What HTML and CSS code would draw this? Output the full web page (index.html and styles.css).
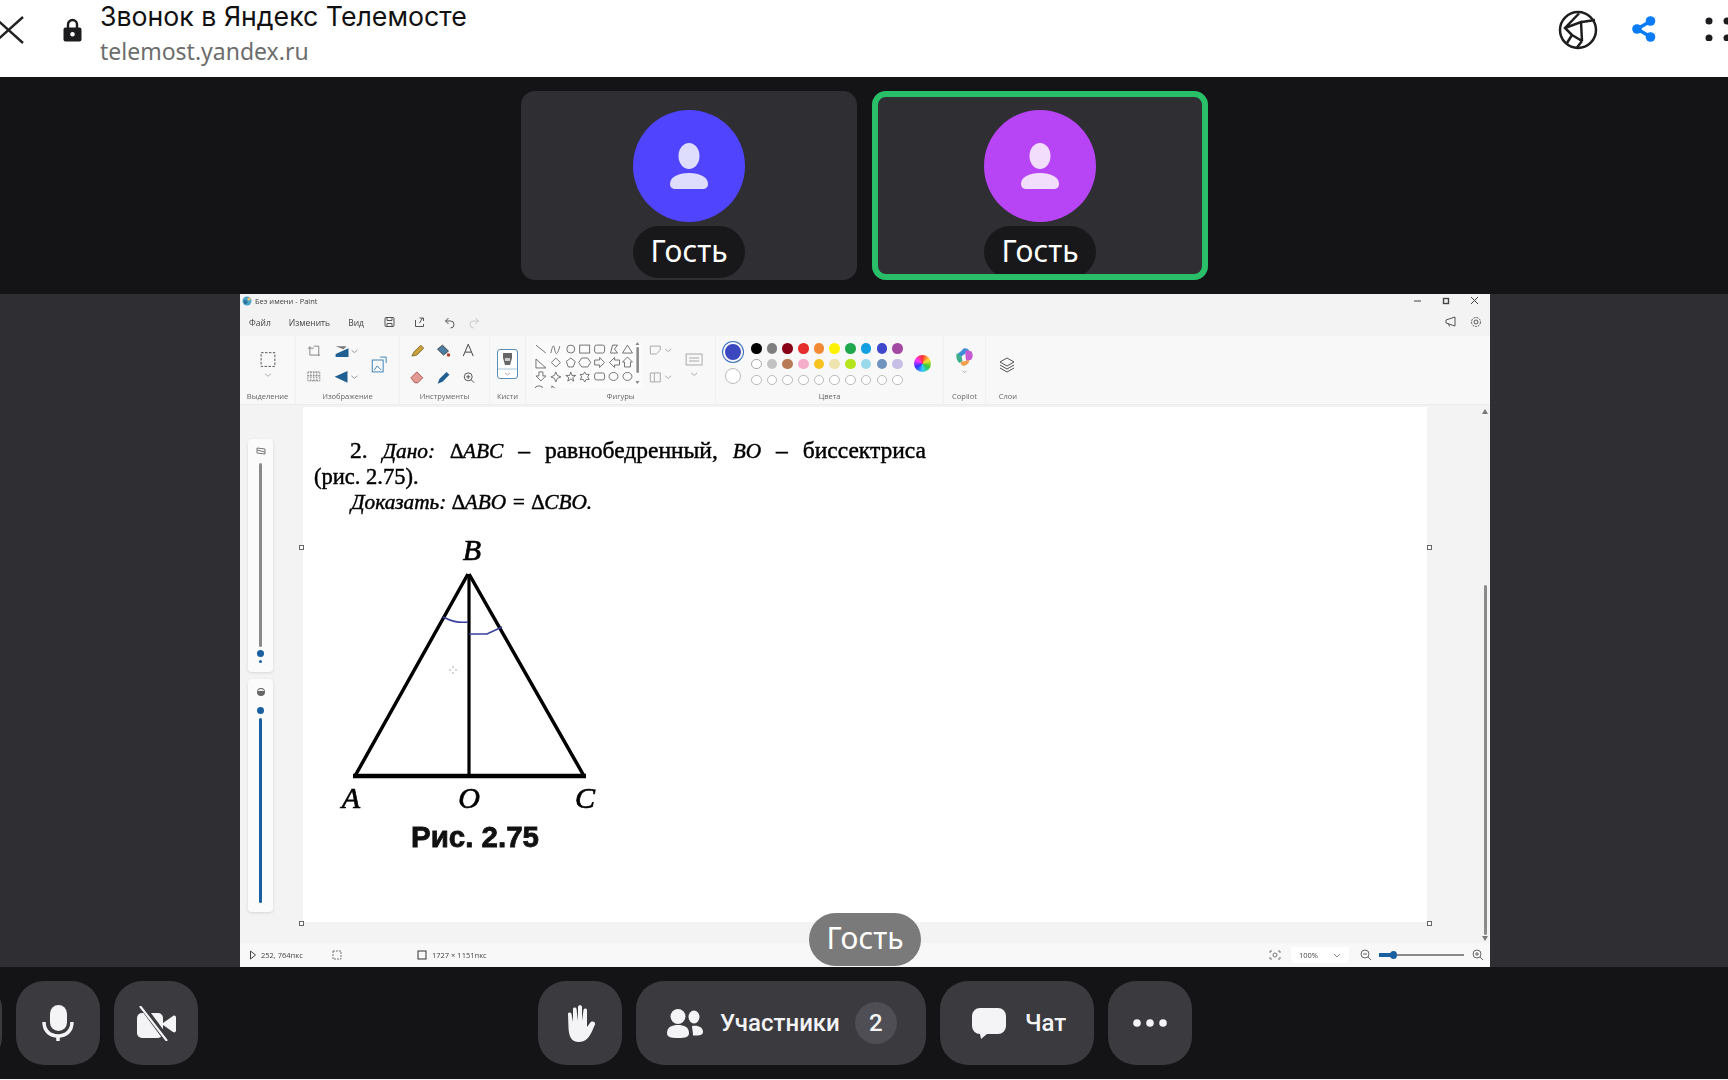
FILE: index.html
```html
<!DOCTYPE html>
<html lang="ru">
<head>
<meta charset="utf-8">
<title>Звонок в Яндекс Телемосте</title>
<link rel="stylesheet" href="styles.css">
</head>
<body>
<header class="topbar">
  <svg class="ic-close" viewBox="-10 0 32 28"><path d="M-8 1L21 27M21 1L-8 27" fill="none" stroke="#222" stroke-width="2.4"/></svg>
  <svg class="ic-lock" viewBox="0 0 19 24"><path d="M5 10V6.500a4.500 4.500 0 0 1 9 0V10" fill="none" stroke="#1c1c1e" stroke-width="2.4"/><path fill-rule="evenodd" d="M2.500 9.500h14a2 2 0 0 1 2 2V21.500a2 2 0 0 1-2 2h-14a2 2 0 0 1-2-2V11.500a2 2 0 0 1 2-2zM9.500 14a2.300 2.300 0 1 0 0 4.600 2.300 2.300 0 0 0 0-4.600z" fill="#1c1c1e"/></svg>
  <div class="titles">
    <div class="page-title">Звонок в Яндекс Телемосте</div>
    <div class="page-url">telemost.yandex.ru</div>
  </div>
  <svg class="ic-globe" viewBox="0 0 40 40"><g fill="none" stroke="#1e1e1e" stroke-width="2.500"><circle cx="20" cy="20" r="18"/><path d="M21 3.500L7 18l7 7M7 18l16-6 1 19M24 12L37 10M24 31l-10-6M24 31l-5 6.500M14 25l-5 8"/></g></svg>
  <svg class="ic-share" viewBox="0 0 24 26"><path d="M19 5L5 13l14 8" fill="none" stroke="#0a7cf5" stroke-width="3.500"/><circle cx="18.500" cy="5" r="4.800" fill="#0a7cf5"/><circle cx="5" cy="13" r="4.800" fill="#0a7cf5"/><circle cx="18.500" cy="21" r="4.800" fill="#0a7cf5"/></svg>
  <svg class="ic-dots" viewBox="0 0 23 24"><g fill="#1c1c1e"><circle cx="4" cy="4" r="3.500"/><circle cx="22" cy="4" r="3.500"/><circle cx="4" cy="21" r="3.500"/><circle cx="22" cy="21" r="3.500"/></g></svg>
</header>

<section class="tiles">
  <article class="tile">
    <div class="avatar avatar-blue"><svg viewBox="0 0 38 46"><ellipse cx="19" cy="13" rx="10.500" ry="13"/><path d="M0 41c0-7 8-11 19-11s19 4 19 11c0 3-2 5-6 5H6c-4 0-6-2-6-5z"/></svg></div>
    <div class="tile-name">Гость</div>
  </article>
  <article class="tile tile-active">
    <div class="avatar avatar-purple"><svg viewBox="0 0 38 46"><ellipse cx="19" cy="13" rx="10.500" ry="13"/><path d="M0 41c0-7 8-11 19-11s19 4 19 11c0 3-2 5-6 5H6c-4 0-6-2-6-5z"/></svg></div>
    <div class="tile-name">Гость</div>
  </article>
</section>

<main class="stage">
  <div class="paint">
    <div class="p-title">
      <svg class="p-logo" viewBox="0 0 10 10"><circle cx="5" cy="5" r="4.500" fill="#4aa3c8"/><circle cx="3.500" cy="6" r="2" fill="#2f6f99"/><circle cx="7" cy="3" r="1.600" fill="#e9c46a"/></svg>
      <span>Без имени - Paint</span>
      <svg class="p-winctl" viewBox="0 0 76 10"><g fill="none" stroke="#444" stroke-width="1"><path d="M0 5h7"/><rect x="29.500" y="2.500" width="5" height="5" stroke-width="1.400"/><path d="M57 1l7 7M64 1l-7 7"/></g></svg>
    </div>
    <div class="p-menu">
      <span class="m-file">Файл</span><span class="m-edit">Изменить</span><span class="m-view">Вид</span>
      <svg class="m-icons" viewBox="0 0 110 14"><g fill="none" stroke="#555" stroke-width="1"><g transform="translate(-4 0)"><rect x="15" y="2.500" width="9" height="9" rx="1"/><path d="M17 2.500v3h5v-3M17 11.500v-3h5v3"/></g><g transform="translate(-4.500 0)"><path d="M46 5v6.500h8V9M50 8l3-5M50 3h4v3"/></g><g transform="translate(-7.500 0)"><path d="M79 6l3-3M79 6l3 3M79 6h5a3 3 0 0 1 0 7"/></g></g><g transform="translate(-3.500 0)"><path d="M108 6l-3-3M108 6l-3 3M108 6h-5a3 3 0 0 0 0 7" fill="none" stroke="#c8c8c8"/></g></svg>
      <span class="m-spacer"></span>
      <svg class="m-right" viewBox="0 0 38 14"><g fill="none" stroke="#555" stroke-width="1"><path d="M1 5l9-3v9L1 8zM3.500 8.500l1 3"/><circle cx="31" cy="7" r="2"/><circle cx="31" cy="7" r="4.500" stroke-dasharray="2 1"/></g></svg>
    </div>
    <div class="ribbon">
      <section class="rg rg-select">
        <svg viewBox="240 336 56 52"><rect x="261.500" y="352.500" width="14" height="14" fill="none" stroke="#555" stroke-dasharray="2.500 1.500"/><path d="M265.500 374l3 2.500 3-2.500" fill="none" stroke="#aaa"/></svg>
        <span>Выделение</span>
      </section>
      <section class="rg rg-image">
        <svg viewBox="297 336 104 52"><g fill="none" stroke="#888"><path d="M311 346v9h10M315 346h5v10M309 348h6"/><path d="M353 350l3 2.500 3-2.500M353 376l3 2.500 3-2.500" stroke="#999"/><path d="M309 372h12v9h-12zM312 372v9M315 372v9M318 372v9M309 376h12" stroke="#777" stroke-dasharray="1.500 1"/><rect x="374" y="360" width="11" height="12" stroke="#3d85b8"/><path d="M376 370l3-4 4 4M388 357h-6M388 357v6" stroke="#3d85b8"/></g><path d="M337 354l13-6v9h-13z" fill="#1f5f92"/><path d="M337 346h11l-3 3z" fill="#777"/><path d="M349 371v12l-13-6z" fill="#1f5f92"/></svg>
        <span>Изображение</span>
      </section>
      <section class="rg rg-tools">
        <svg viewBox="401 336 90 52"><path d="M413 356l2-4 7-7 3 3-7 7z" fill="#c9a23f" stroke="#8a7030"/><path d="M439 349l5-4 6 6-5 4z" fill="#4a7ea6" stroke="#444"/><circle cx="450" cy="355" r="1.800" fill="#b04030"/><path d="M465 356l5-12 5 12M467 352h6" fill="none" stroke="#444"/><path d="M412 378l6-6 6 6-5 5h-3z" fill="#e29a94" stroke="#b05a55"/><path d="M439 384l2-5 7-7 3 3-7 7z" fill="#1f5f92"/><circle cx="470" cy="377" r="4" fill="none" stroke="#555"/><path d="M473 380l3 3M468 377h4M470 375v4" stroke="#555"/></svg>
        <span>Инструменты</span>
      </section>
      <section class="rg rg-brush">
        <div class="brush-box">
          <svg viewBox="0 0 19 28"><path d="M5 3h9v5l-2 7H7L5 8z" fill="#666"/><path d="M7 8h5v3H7z" fill="#ccc"/><path d="M0 19h19" stroke="#a8c4d8"/><path d="M7 23l2.500 2 2.500-2" fill="none" stroke="#aaa"/></svg>
        </div>
        <span>Кисти</span>
      </section>
      <section class="rg rg-shapes">
        <svg viewBox="526 336 190 52"><rect x="533" y="342" width="110" height="46" rx="3" fill="#fbfbfb"/><g fill="none" stroke="#666" stroke-width=".9"><path d="M536 345l10 8M551 353c2-9 3-9 4-3s3 4 5-4"/><circle cx="571" cy="349" r="4"/><rect x="580" y="345" width="10" height="8"/><rect x="595" y="345" width="10" height="8" rx="2"/><path d="M611 353l2-8h5l-3 4 3 4z"/><path d="M623 353l5-8 5 8z"/><path d="M536 368v-9l10 9z"/><path d="M556 358l4.500 4.500-4.500 4.500-4.500-4.500z"/><path d="M571 358l4.500 3.500-2 5.500h-5l-2-5.500z"/><path d="M582 358h6l3 4.500-3 4.500h-6l-3-4.500z"/><path d="M595 360h5v-2.500l5 5-5 5v-2.500h-5z"/><path d="M620 360h-5v-2.500l-5 5 5 5v-2.500h5z"/><path d="M625 362h-2l5-5 5 5h-2v5h-6z"/><path d="M539 372h4v4h3l-5 5-5-5h3z"/><path d="M556 372l1.500 3.500 3.500 1.500-3.500 1.500-1.500 3.500-1.500-3.500-3.500-1.500 3.500-1.500z"/><path d="M571 372l1.200 3.500h3.800l-3 2.200 1 3.500-3-2-3 2 1-3.500-3-2.200h3.800z"/><path d="M585 372l1.500 2.500h3l-1.500 2.500 1.500 2.500h-3l-1.500 2.500-1.500-2.500h-3l1.500-2.500-1.500-2.500h3z"/><rect x="595" y="373" width="10" height="7" rx="2"/><ellipse cx="614" cy="376.500" rx="4.500" ry="4"/><ellipse cx="628" cy="376.500" rx="4.500" ry="4"/><path d="M535 389a4 3 0 0 1 8 0M552 389v-3l4 3"/></g><rect x="637" y="347" width="2.500" height="26" rx="1.200" fill="#888"/><path d="M636 345l2-3 2 3zM636 381l2 3 2-3z" fill="#888"/><g fill="none" stroke="#aaa"><path d="M651 346h10v4l-4 4h-6z"/><path d="M666 349l3 2.500 3-2.500M666 376l3 2.500 3-2.500"/><path d="M651 373h10v9h-10zM655 373v9"/><rect x="687" y="354" width="16" height="11"/><path d="M690 358h10M690 361h10M692 373l3 2.500 3-2.500"/></g></svg>
        <span>Фигуры</span>
      </section>
      <section class="rg rg-colors">
        <div class="colors">
          <div class="cur"><i class="cur-main"></i><i class="cur-alt"></i></div>
          <div class="swatches">
            <i class="c1"></i><i class="c2"></i><i class="c3"></i><i class="c4"></i><i class="c5"></i><i class="c6"></i><i class="c7"></i><i class="c8"></i><i class="c9"></i><i class="c10"></i>
            <i class="c11"></i><i class="c12"></i><i class="c13"></i><i class="c14"></i><i class="c15"></i><i class="c16"></i><i class="c17"></i><i class="c18"></i><i class="c19"></i><i class="c20"></i>
            <i class="e"></i><i class="e"></i><i class="e"></i><i class="e"></i><i class="e"></i><i class="e"></i><i class="e"></i><i class="e"></i><i class="e"></i><i class="e"></i>
          </div>
          <i class="wheel"></i>
        </div>
        <span>Цвета</span>
      </section>
      <section class="rg rg-copilot">
        <svg viewBox="944 336 42 52"><path d="M958 355c0-3 4-3 5-6 2-2 6-1 7 2l-5 3-4 3z" fill="#3f8fd8"/><path d="M966 350l6 1c2 3 2 7-1 9l-4 1-1-4z" fill="#c65ad0"/><path d="M957 353l5 3 1 5-3 2c-3-2-4-6-3-10z" fill="#3fb08c"/><path d="M961 362l9-2c0 3-3 6-6 6-2 0-3-2-3-4z" fill="#f0a050"/><path d="M963 371l2 2 2-2" fill="none" stroke="#aaa"/></svg>
        <span>Copilot</span>
      </section>
      <section class="rg rg-layers">
        <svg viewBox="986 336 44 52"><g fill="none" stroke="#555"><path d="M1007 358l7 4-7 4-7-4z"/><path d="M1000 365l7 4 7-4M1000 368l7 4 7-4"/></g></svg>
        <span>Слои</span>
      </section>
    </div>
    <div class="workspace">
      <aside class="sliders">
        <div class="s-panel">
          <svg class="s-icon" viewBox="0 0 10 8"><path d="M1 1l8 1v5L1 6z" fill="none" stroke="#777"/><path d="M1 3l8 2" stroke="#777"/></svg>
          <div class="s-track s-gray"></div>
          <i class="s-knob"></i>
          <i class="s-dot"></i>
        </div>
        <div class="s-panel">
          <svg class="s-icon s-drop" viewBox="0 0 10 10"><circle cx="5" cy="5" r="4" fill="#666"/><path d="M1.500 4a4 4 0 0 1 7 0z" fill="#eee"/></svg>
          <i class="s-knob s-knob-2"></i>
          <div class="s-track s-blue"></div>
        </div>
      </aside>
      <div class="canvas">
        <div class="doc">
          <p class="l1">2. <em>Дано:</em> <em>∆ABC</em> – равнобедренный, <em>BO</em> – биссектриса</p>
          <p class="l2">(рис. 2.75).</p>
          <p class="l3"><em>Доказать: ∆ABO = ∆CBO.</em></p>
        </div>
        <svg class="figure" viewBox="320 530 300 340">
          <g fill="none" stroke="#000">
            <path d="M468 574L355 776M469 574L584 776" stroke-width="3.500"/>
            <path d="M469 574V776" stroke-width="3.200"/>
            <path d="M353 776H586" stroke-width="4.500"/>
          </g>
          <g fill="none" stroke="#39409c" stroke-width="1.600"><path d="M443 617c8 4 14 6 25 5"/><path d="M469 634h18l15-7"/></g>
          <path d="M453 666v2M453 672v2M449 670h2M455 670h2" stroke="#aaa"/>
          <g class="fig-label"><text x="472" y="560" text-anchor="middle">B</text><text x="351" y="808" text-anchor="middle">A</text><text x="469" y="808" text-anchor="middle">O</text><text x="585" y="808" text-anchor="middle">C</text></g>
          <text class="fig-cap" x="475" y="847" text-anchor="middle">Рис. 2.75</text>
        </svg>
        <i class="h h1"></i><i class="h h2"></i><i class="h h3"></i><i class="h h4"></i>
      </div>
      <div class="gutter">
        <i class="sb-up"></i>
        <i class="sb-thumb"></i>
        <i class="sb-down"></i>
      </div>
    </div>
    <footer class="status">
      <svg class="st-cur" viewBox="0 0 8 10"><path d="M1.500 1v8l5-4z" fill="none" stroke="#444"/></svg>
      <span class="st-pos">252, 764пкс</span>
      <svg class="st-sel" viewBox="0 0 10 10"><rect x="1" y="1" width="8" height="8" fill="none" stroke="#777" stroke-dasharray="2 1"/></svg>
      <svg class="st-size" viewBox="0 0 10 10"><rect x="1" y="1" width="8" height="8" fill="none" stroke="#333"/></svg>
      <span>1727 × 1151пкс</span>
      <span class="m-spacer"></span>
      <svg class="st-fit" viewBox="0 0 12 10"><g fill="none" stroke="#777"><path d="M1 3V1h2M9 1h2v2M11 7v2H9M3 9H1V7"/><circle cx="6" cy="5" r="2"/></g></svg>
      <div class="st-zoom"><span>100%</span><svg viewBox="0 0 8 5"><path d="M1 1l3 3 3-3" fill="none" stroke="#888"/></svg></div>
      <svg class="st-zi" viewBox="0 0 12 12"><g fill="none" stroke="#666"><circle cx="5" cy="5" r="4"/><path d="M8 8l3 3M3 5h4"/></g></svg>
      <div class="st-slider"><i class="st-fill"></i><i class="st-knob"></i></div>
      <svg class="st-zi st-zi-2" viewBox="0 0 12 12"><g fill="none" stroke="#666"><circle cx="5" cy="5" r="4"/><path d="M8 8l3 3M3 5h4M5 3v4"/></g></svg>
    </footer>
  </div>
  <div class="speaker">Гость</div>
</main>

<footer class="callbar">
  <button class="cb cb-sliver"></button>
  <button class="cb cb-icon">
    <svg class="ic-mic" viewBox="0 0 32 36"><rect x="8" y="0" width="17" height="26" rx="8.500" fill="#f4f4f6"/><path d="M2 17c0 9 6 14 14 14s14-5 14-14" fill="none" stroke="#f4f4f6" stroke-width="3.500"/><path d="M16 30v6" stroke="#f4f4f6" stroke-width="3.500"/></svg>
  </button>
  <button class="cb cb-icon">
    <svg class="ic-cam" viewBox="0 0 39 35"><rect x="0" y="7" width="26" height="25" rx="5" fill="#f4f4f6"/><path d="M26 17l10-7c1.500-1 3 0 3 1.500v13c0 1.500-1.500 2.500-3 1.500l-10-7z" fill="#f4f4f6"/><path d="M5 0l26 35" stroke="#3a3a3f" stroke-width="6"/><path d="M3 0l27 35" stroke="#f4f4f6" stroke-width="2.200"/></svg>
  </button>
  <div class="cb-center">
    <button class="cb cb-icon">
      <svg class="ic-hand" viewBox="0 0 32 37"><path d="M4 9c0-2 3-2 3.500 0L9 17 9 4c0-2 3.500-2 3.500 0L14 16V2c0-2.500 4-2.500 4 0l0 14 1.500-11c.3-2 3.500-2 3.500 0L23 22l3-4c2-3 6-1 5 1.500C28 26 25 37 15 37 7 37 5 31 4.500 23z" fill="#f4f4f6"/></svg>
    </button>
    <button class="cb cb-people">
      <svg class="ic-people" viewBox="0 0 36 29"><circle cx="11" cy="7.500" r="7.500" fill="#f4f4f6"/><path d="M0 24c0-6 5-8 11-8s11 2 11 8c0 4-3 5-11 5S0 28 0 24z" fill="#f4f4f6"/><ellipse cx="27" cy="8" rx="5.500" ry="6.500" fill="#f4f4f6"/><path d="M25 17c6-1 11 1 11 6 0 3-3 3.500-10 3.500 0-4-1-7-1-9.500z" fill="#f4f4f6"/></svg>
      <span class="cb-label">Участники</span>
      <span class="count">2</span>
    </button>
    <button class="cb cb-chat">
      <svg class="ic-chat" viewBox="0 0 34 31"><path d="M8 0h18a8 8 0 0 1 8 8v10a8 8 0 0 1-8 8H15L9 31l-1-5a8 8 0 0 1-8-8V8a8 8 0 0 1 8-8z" fill="#f4f4f6"/></svg>
      <span class="cb-label">Чат</span>
    </button>
    <button class="cb cb-icon">
      <svg class="ic-more" viewBox="0 0 34 8"><circle cx="4" cy="4" r="3.800" fill="#f4f4f6"/><circle cx="17" cy="4" r="3.800" fill="#f4f4f6"/><circle cx="30" cy="4" r="3.800" fill="#f4f4f6"/></svg>
    </button>
  </div>
</footer>
</body>
</html>
```
FILE: styles.css
```css
* { box-sizing: border-box; }
html, body { margin: 0; height: 1080px; overflow: hidden; }
body { width: 1728px; background: #f4f4f4; font-family: "Noto Sans", sans-serif; display: flex; flex-direction: column; }
i { display: block; }

/* browser header */
.topbar { height: 77px; background: #fff; display: flex; align-items: flex-start; flex: none; overflow: hidden; }
.ic-close { width: 32px; height: 28px; margin: 16px 0 0 -8px; flex: none; }
.ic-lock { width: 19px; height: 24px; margin: 18px 0 0 39px; flex: none; }
.titles { margin-left: 18px; }
.page-title { font-family: Inter, "Noto Sans", sans-serif; font-size: 26.700px; line-height: 33px; color: #111; }
.page-url { font-size: 23px; line-height: 30px; color: #6d6d6d; margin-top: 3px; }
.ic-globe { width: 40px; height: 40px; margin: 10px 0 0 auto; flex: none; }
.ic-share { width: 24px; height: 26px; margin: 16px 0 0 34px; flex: none; }
.ic-dots { width: 23px; height: 24px; margin: 17px 0 0 49px; flex: none; }

/* participant tiles */
.tiles { height: 217px; flex: none; display: flex; justify-content: center; gap: 15px; padding: 14px 0 0 1px; background: #141416; }
.tile { width: 336px; height: 189px; background: #2e2e33; border-radius: 14px; display: flex; flex-direction: column; align-items: center; padding-top: 19px; position: relative; }
.tile-active::after { content: ""; position: absolute; inset: 0; border: 6px solid #29bf68; border-radius: 14px; }
.avatar { width: 112px; height: 112px; border-radius: 50%; display: flex; align-items: center; justify-content: center; flex: none; }
.avatar svg { width: 38px; height: 46px; fill: #fff; opacity: .82; }
.avatar-blue { background: #5044fe; }
.avatar-purple { background: #b845f5; }
.tile-name { width: 112px; height: 52px; border-radius: 26px; background: #18181a; color: #fff; font-size: 30px; line-height: 50px; text-align: center; margin-top: 4px; }

/* shared screen */
.stage { height: 673px; flex: none; background: #2e2e33; display: flex; justify-content: center; position: relative; padding-left: 2px; }
.paint { width: 1250px; height: 673px; background: #f3f3f3; display: flex; flex-direction: column; font-family: "Open Sans", sans-serif; color: #444; filter: blur(.5px); }
.p-title { height: 14px; flex: none; display: flex; align-items: center; padding: 0 0 0 2px; font-size: 7.500px; gap: 3px; }
.p-logo { width: 10px; height: 10px; }
.p-winctl { width: 76px; height: 10px; margin-left: auto; margin-right: 0; }
.p-menu { height: 28px; flex: none; display: flex; align-items: center; font-size: 8.500px; padding-left: 9px; }
.m-edit { margin-left: 18px; }
.m-view { margin-left: 18px; }
.m-icons { width: 110px; height: 14px; margin-left: 10px; }
.m-spacer { flex: 1; }
.m-right { width: 38px; height: 14px; margin-right: 7px; }
.ribbon { height: 69px; flex: none; background: #f8f8f8; display: flex; border-bottom: 1px solid #ececec; }
.rg { display: flex; flex-direction: column; align-items: center; border-right: 1px solid #f0f0f0; font-size: 7.500px; color: #666; }
.rg > svg { width: 100%; height: 52px; flex: none; }
.rg > span { line-height: 12px; margin-top: 2px; white-space: nowrap; }
.rg-select { width: 56px; }
.rg-image { width: 104px; }
.rg-tools { width: 90px; }
.rg-brush { width: 36px; }
.rg-shapes { width: 190px; }
.rg-colors { width: 228px; }
.rg-copilot { width: 42px; }
.rg-layers { width: 44px; border-right: 0; }
.brush-box { width: 21px; height: 30px; margin-top: 13px; margin-bottom: 9px; border: 1px solid #5a8fb5; border-radius: 3px; background: #fff; flex: none; }
.brush-box svg { width: 100%; height: 100%; display: block; }
.colors { height: 52px; width: 100%; flex: none; display: flex; padding-left: 7px; }
.cur { width: 20px; padding-top: 6px; display: flex; flex-direction: column; align-items: center; gap: 6px; }
.cur-main { width: 20px; height: 20px; border-radius: 50%; background: #3b48c0; border: 2px solid #f8f8f8; box-shadow: 0 0 0 1px #3b6fc0; }
.cur-alt { width: 16px; height: 16px; border-radius: 50%; background: #fff; border: 1px solid #bbb; }
.swatches { display: grid; grid-template-columns: repeat(10, 10.500px); gap: 5.300px 5.200px; margin: 7px 0 0 8px; align-content: start; }
.swatches i { width: 10.500px; height: 10.500px; border-radius: 50%; }
.c1 { background: #000; } .c2 { background: #7f7f7f; } .c3 { background: #880015; } .c4 { background: #e52d2d; } .c5 { background: #f28a35; }
.c6 { background: #fff200; } .c7 { background: #22a84c; } .c8 { background: #12a0e0; } .c9 { background: #3f48cc; } .c10 { background: #a349a4; }
.c11 { background: #fff; border: 1px solid #aaa; } .c12 { background: #c3c3c3; } .c13 { background: #b97a57; } .c14 { background: #f5aec9; } .c15 { background: #f7c320; }
.c16 { background: #efe4b0; } .c17 { background: #b5e61d; } .c18 { background: #99d9ea; } .c19 { background: #7092be; } .c20 { background: #c8bfe7; }
.e { background: #fff; border: 1px solid #bbb; }
.wheel { width: 17px; height: 17px; border-radius: 50%; margin: 19px 0 0 11px; background: conic-gradient(#f33, #fd3, #3c3, #3cf, #33f, #f3f, #f33); }

/* workspace */
.workspace { flex: 1; display: flex; min-height: 0; padding-top: 2px; padding-bottom: 21px; }
.sliders { width: 63px; flex: none; display: flex; flex-direction: column; gap: 7px; padding: 32px 0 0 8px; }
.s-panel { width: 25px; height: 233px; background: #fbfbfb; border-radius: 4px; box-shadow: 0 1px 3px rgba(0,0,0,.12); display: flex; flex-direction: column; align-items: center; }
.s-icon { width: 10px; height: 8px; margin-top: 8px; flex: none; }
.s-drop { height: 10px; }
.s-track { width: 2.500px; flex: none; border-radius: 2px; }
.s-gray { height: 184px; background: #8a8a8a; margin-top: 8px; }
.s-blue { height: 185px; background: #1a5fa0; margin-top: 4px; }
.s-knob { width: 7px; height: 7px; border-radius: 50%; background: #1a5fa0; margin-top: 3px; flex: none; }
.s-knob-2 { margin-top: 10px; }
.s-dot { width: 3px; height: 3px; background: #1a5fa0; border-radius: 50%; margin-top: 3px; }
.canvas { width: 1124px; background: #fff; position: relative; flex: none; }
.doc { width: 612px; margin-left: 11px; padding-top: 31px; font-family: "Liberation Serif", serif; font-size: 22.500px; color: #000; line-height: 25px; -webkit-text-stroke: .45px #000; }
.doc p { margin: 0; }
.doc em { font-size: 21.300px; }
.l1 { font-size: 23.500px; text-indent: 36px; text-align: justify; text-align-last: justify; }
.l3 { text-indent: 37px; }
.figure { display: block; width: 300px; height: 340px; margin: 15px 0 0 17px; }
.fig-label text { font: italic 30px "Liberation Serif", serif; fill: #000; stroke: #000; stroke-width: .7px; }
.fig-cap { font: bold 29.500px "Liberation Sans", sans-serif; fill: #111; stroke: #111; stroke-width: .8px; }
.h { position: absolute; width: 5px; height: 5px; background: #fff; border: 1px solid #666; }
.h1 { left: -4px; top: 138px; }
.h2 { left: -4px; top: 514px; }
.h3 { right: -5px; top: 138px; }
.h4 { right: -5px; top: 514px; }
.gutter { flex: 1; margin-bottom: -21px; position: relative; display: flex; flex-direction: column; align-items: flex-end; padding: 2px 2px 0 0; }
.sb-up { width: 0; height: 0; border: 3px solid transparent; border-top: 0; border-bottom: 5px solid #777; }
.sb-thumb { width: 3px; height: 350px; background: #8a8a8a; border-radius: 2px; margin: 171px 1.500px 0 0; }
.sb-down { width: 0; height: 0; border: 3px solid transparent; border-bottom: 0; border-top: 5px solid #777; margin-top: 1px; }

/* status */
.status { height: 24px; flex: none; background: #f8f8f8; display: flex; align-items: center; font-size: 7.500px; padding-left: 9px; }
.st-cur { width: 8px; height: 10px; }
.st-pos { margin-left: 4px; width: 71px; }
.st-sel { width: 10px; height: 10px; }
.st-size { width: 10px; height: 10px; margin: 0 5px 0 75px; }
.st-fit { width: 12px; height: 10px; }
.st-zoom { width: 58px; height: 16px; background: #fff; border-radius: 3px; margin-left: 10px; display: flex; align-items: center; justify-content: space-between; padding: 0 8px; }
.st-zoom svg { width: 8px; height: 5px; }
.st-zi { width: 12px; height: 12px; margin-left: 11px; }
.st-zi-2 { margin: 0 6px 0 8px; }
.st-slider { width: 85px; height: 2px; background: #8a8a8a; margin-left: 7px; position: relative; }
.st-fill { position: absolute; left: 0; top: -1px; width: 14px; height: 4px; background: #1a5fa0; }
.st-knob { position: absolute; left: 11px; top: -3px; width: 7px; height: 8px; border-radius: 50%; background: #1a5fa0; }

.speaker { position: absolute; left: 809px; top: 619px; width: 112px; height: 53px; border-radius: 27px; background: #7a7a7a; color: #fff; font-size: 30px; line-height: 50px; text-align: center; }

/* call bar */
.callbar { height: 112px; flex: none; display: flex; gap: 14px; padding-top: 14px; background: #141416; }
.cb { height: 84px; border: 0; border-radius: 28px; background: #3a3a3f; color: #f4f4f6; font: 500 24px/1 Roboto, "Noto Sans", sans-serif; display: flex; align-items: center; justify-content: center; padding: 0; flex: none; }
.cb-sliver { width: 82px; margin-left: -80px; }
.cb-icon { width: 84px; }
.cb-center { display: flex; gap: 14px; margin-left: 326px; }
.cb-people { width: 290px; justify-content: flex-start; padding-left: 31px; }
.cb-chat { width: 154px; justify-content: flex-start; padding-left: 32px; }
.ic-mic { width: 32px; height: 36px; }
.ic-cam { width: 39px; height: 35px; }
.ic-hand { width: 32px; height: 37px; }
.ic-people { width: 36px; height: 29px; }
.ic-chat { width: 34px; height: 31px; margin-right: 19px; }
.ic-more { width: 34px; height: 8px; }
.cb-people .cb-label { margin-left: 17px; }
.count { width: 42px; height: 42px; border-radius: 50%; background: #4e4e54; margin-left: 15px; display: flex; align-items: center; justify-content: center; }
```
